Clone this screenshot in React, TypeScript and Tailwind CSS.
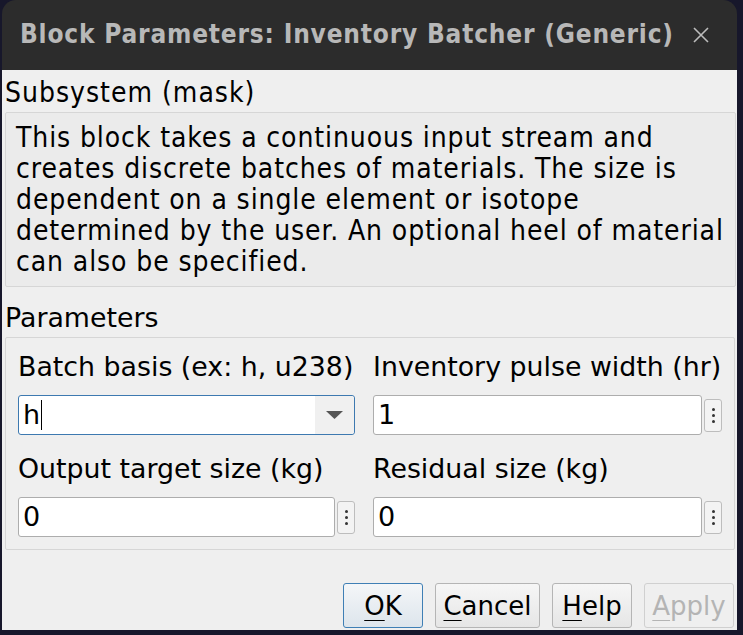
const sans = "font-['DejaVu_Sans',sans-serif]"
const cond = "font-['DejaVu_Sans_Condensed','DejaVu_Sans',sans-serif]"

function DotsButton() {
  return (
    <div className="w-[18px] h-[33px] ml-[2px] shrink-0 rounded-[3px] border border-[#bdbdbd] bg-[#f3f3f3] flex flex-col items-center justify-center gap-[3px]">
      <span className="w-[3px] h-[3px] rounded-full bg-[#333]" />
      <span className="w-[3px] h-[3px] rounded-full bg-[#333]" />
      <span className="w-[3px] h-[3px] rounded-full bg-[#333]" />
    </div>
  )
}

function TextField({ value }: { value: string }) {
  return (
    <div className="flex items-center">
      <div className="flex-1 h-[40px] rounded-[3px] border border-[#adadad] bg-white flex items-center px-[4px] text-[27px] text-black">
        {value}
      </div>
      <DotsButton />
    </div>
  )
}

function Field({ label, children }: { label: string; children: React.ReactNode }) {
  return (
    <div className="flex flex-col">
      <div className="text-[26.8px] leading-[32px] text-black mb-[12px] whitespace-nowrap">{label}</div>
      {children}
    </div>
  )
}

function DialogButton({
  label,
  width,
  disabled,
  primary,
}: {
  label: string
  width: string
  disabled?: boolean
  primary?: boolean
}) {
  return (
    <button
      className={
        "h-[45px] rounded-[3px] border text-[26px] leading-none " +
        width +
        " " +
        (primary
          ? "border-[#3f7fb5] bg-gradient-to-b from-[#f4f6f8] to-[#dde5ec] text-black"
          : disabled
            ? "border-[#d0d0d0] bg-[#efefef] text-[#b4b4b4]"
            : "border-[#b5b5b5] bg-gradient-to-b from-[#f6f6f6] to-[#e6e6e6] text-black")
      }
    >
      <span className="underline underline-offset-[5px] decoration-[1px]">{label[0]}</span>
      {label.slice(1)}
    </button>
  )
}

export default function App() {
  return (
    <div className={"w-[743px] h-[635px] bg-[#17172b] overflow-hidden " + sans}>
      <div className="ml-[2px] w-[735px] h-[630px] flex flex-col rounded-t-[14px] overflow-hidden">
        <div className="h-[70px] shrink-0 bg-[#2c2c2c] flex items-center pl-[18px] pr-[28px] pb-[1px]">
          <div className={"flex-1 text-[26px] tracking-[0.8px] font-bold text-[#b8b8b8] whitespace-nowrap " + cond}>
            Block Parameters: Inventory Batcher (Generic)
          </div>
          <svg width="16" height="16" viewBox="0 0 16 16">
            <path d="M1 1 L15 15 M15 1 L1 15" stroke="#bcbcbc" strokeWidth="1.6" />
          </svg>
        </div>
        <div className="flex-1 bg-[#efefef] flex flex-col pl-[3px]">
          <div className={"text-[28px] tracking-[1px] leading-[34px] text-black pt-[6px] mb-[2px] " + cond}>
            Subsystem (mask)
          </div>
          <div
            className={
              "border border-[#d6d6d6] bg-[#ebebeb] rounded-[2px] mr-[1px] px-[10px] pt-[9px] pb-[9px] text-[28px] tracking-[0.9px] leading-[31px] text-black whitespace-nowrap " +
              cond
            }
          >
            This block takes a continuous input stream and
            <br />
            creates discrete batches of materials. The size is
            <br />
            dependent on a single element or isotope
            <br />
            determined by the user. An optional heel of material
            <br />
            can also be specified.
          </div>
          <div className="text-[26.8px] leading-[32px] text-black pt-[15px] mb-[3px]">Parameters</div>
          <div className="border border-[#d6d6d6] rounded-[2px] mr-[2px] pl-[12px] pt-[13px] pb-[12px] grid grid-cols-[337px_349px] gap-x-[18px] gap-y-[18px]">
            <Field label="Batch basis (ex: h, u238)">
              <div className="h-[40px] rounded-[3px] border border-[#3d79b0] bg-white flex items-stretch text-[27px] text-black">
                <div className="flex-1 flex items-center px-[4px]">
                  h<span className="inline-block w-[1px] h-[30px] bg-black ml-[1px]" />
                </div>
                <div className="w-[39px] bg-[#f0f0f0] flex items-center justify-center rounded-r-[3px]">
                  <svg width="17" height="8" viewBox="0 0 17 8">
                    <path d="M0 0 L17 0 L8.5 8 Z" fill="#555" />
                  </svg>
                </div>
              </div>
            </Field>
            <Field label="Inventory pulse width (hr)">
              <TextField value="1" />
            </Field>
            <Field label="Output target size (kg)">
              <TextField value="0" />
            </Field>
            <Field label="Residual size (kg)">
              <TextField value="0" />
            </Field>
          </div>
          <div className="flex-1" />
          <div className="flex justify-end gap-[12px] pb-[2px] pr-[3px]">
            <DialogButton label="OK" width="w-[80px]" primary />
            <DialogButton label="Cancel" width="w-[105px]" />
            <DialogButton label="Help" width="w-[80px]" />
            <DialogButton label="Apply" width="w-[90px]" disabled />
          </div>
        </div>
      </div>
    </div>
  )
}
